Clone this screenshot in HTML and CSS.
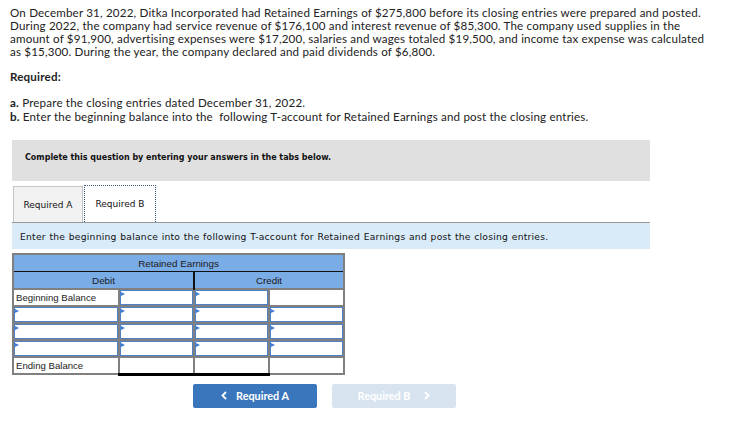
FILE: index.html
```html
<!DOCTYPE html>
<html>
<head>
<meta charset="utf-8">
<link rel="stylesheet" href="styles.css">
</head>
<body>
<div class="page">
  <p class="intro">On December 31, 2022, Ditka Incorporated had Retained Earnings of $275,800 before its closing entries were prepared and posted. During 2022, the company had service revenue of $176,100 and interest revenue of $85,300. The company used supplies in the amount of $91,900, advertising expenses were $17,200, salaries and wages totaled $19,500, and income tax expense was calculated as $15,300. During the year, the company declared and paid dividends of $6,800.</p>
  <p class="req">Required:</p>
  <p class="item"><b>a.</b> Prepare the closing entries dated December 31, 2022.</p>
  <p class="item"><b>b.</b> Enter the beginning balance into the &nbsp;following T-account for Retained Earnings and post the closing entries.</p>

  <div class="panel">
    <div class="notice">Complete this question by entering your answers in the tabs below.</div>
    <div class="tabs">
      <div class="tab">Required A</div>
      <div class="tab active">Required B</div>
    </div>
    <div class="instr">Enter the beginning balance into the following T-account for Retained Earnings and post the closing entries.</div>

    <table class="tacct">
      <colgroup>
        <col class="c1"><col class="c2"><col class="c3"><col class="c4">
      </colgroup>
      <tr><th colspan="4" class="title">Retained Earnings</th></tr>
      <tr><th colspan="2" class="side dr">Debit</th><th colspan="2" class="side">Credit</th></tr>
      <tr>
        <td class="lbl">Beginning Balance</td>
        <td class="in"><div class="box"></div></td>
        <td class="in split"><div class="box"></div></td>
        <td class="plain"></td>
      </tr>
      <tr>
        <td class="in"><div class="box"></div></td>
        <td class="in"><div class="box"></div></td>
        <td class="in split"><div class="box"></div></td>
        <td class="in"><div class="box"></div></td>
      </tr>
      <tr>
        <td class="in"><div class="box"></div></td>
        <td class="in"><div class="box"></div></td>
        <td class="in split"><div class="box"></div></td>
        <td class="in"><div class="box"></div></td>
      </tr>
      <tr>
        <td class="in"><div class="box"></div></td>
        <td class="in"><div class="box"></div></td>
        <td class="in split"><div class="box"></div></td>
        <td class="in"><div class="box"></div></td>
      </tr>
      <tr class="end">
        <td class="lbl">Ending Balance</td>
        <td class="tot"></td>
        <td class="tot split"></td>
        <td class="plain last"></td>
      </tr>
    </table>

    <div class="nav">
      <div class="btn prev"><svg width="6" height="9" viewBox="0 0 6 9"><path d="M5 1 L1.5 4.5 L5 8" fill="none" stroke="#fff" stroke-width="1.8"/></svg><span>Required A</span></div>
      <div class="btn next"><span>Required B</span><svg width="6" height="9" viewBox="0 0 6 9"><path d="M1 1 L4.5 4.5 L1 8" fill="none" stroke="#fff" stroke-width="1.8"/></svg></div>
    </div>
  </div>
</div>
</body>
</html>
```

FILE: styles.css
```css
html, body {
  margin: 0;
  padding: 0;
  background: #fff;
}
.page {
  padding: 6px 0 0 10px;
  font-family: "Lato", "Liberation Sans", sans-serif;
  color: #222;
}
.intro {
  margin: 0;
  width: 702px;
  font-size: 11.6px;
  letter-spacing: 0.175px;
  line-height: 13px;
}
.req {
  margin: 12px 0 0 0;
  font-size: 11.6px;
  letter-spacing: 0.175px;
  line-height: 13px;
  font-weight: bold;
}
.item {
  margin: 0;
  font-size: 11.6px;
  letter-spacing: 0.175px;
  line-height: 14px;
}
.req + .item {
  margin-top: 13px;
}
.item b {
  font-weight: bold;
}
.panel {
  margin: 16px 0 0 2px;
  width: 638px;
}
.notice {
  background: #e0e0e0;
  height: 41px;
  box-sizing: border-box;
  padding: 11px 0 0 13px;
  font-family: "DejaVu Sans Condensed", "DejaVu Sans", sans-serif;
  font-weight: bold;
  font-size: 8.9px;
  line-height: 12px;
  color: #111;
}
.tabs {
  display: flex;
  margin-top: 4px;
  padding-left: 1px;
  border-bottom: 1px solid #999;
  height: 37px;
  align-items: flex-end;
}
.tab {
  height: 36px;
  box-sizing: border-box;
  padding: 0;
  display: flex;
  align-items: center;
  background: #f2f2f2;
  border: 1px solid #c4c4c4;
  border-bottom: none;
  font-family: "DejaVu Sans", sans-serif;
  font-size: 9px;
  color: #111;
  width: 70px;
  justify-content: center;
}
.tab.active {
  height: 37px;
  background: #fff;
  border: 1px dotted #3c5a80;
  border-bottom: none;
  margin-left: 1px;
  width: 72px;
}
.instr {
  background: #d9ebf9;
  height: 26px;
  box-sizing: border-box;
  padding: 8px 0 0 8px;
  font-family: "DejaVu Sans", sans-serif;
  font-size: 9.2px;
  letter-spacing: 0.24px;
  word-spacing: 0.4px;
  line-height: 12px;
  color: #111;
}
.tacct {
  margin-top: 4px;
  border-collapse: collapse;
  table-layout: fixed;
  width: 331px;
  border: 2px solid #808080;
  font-family: "Liberation Sans", sans-serif;
  font-size: 9.6px;
  color: #222;
}
.c1 { width: 106px; }
.c2, .c3, .c4 { width: 75px; }
.tacct th {
  background: #7aace6;
  font-weight: normal;
  height: 16px;
  padding: 0;
  font-size: 9.8px;
  color: #1a1a1a;
}
.tacct th.title {
  border-bottom: 1px solid #111;
}
.tacct th.dr {
  border-right: 2px solid #111;
}
.tacct td {
  height: 17px;
  padding: 0;
  border: 2px solid #808080;
  background: #fff;
  box-sizing: border-box;
}
.tacct td.split {
  border-left: 2px solid #111;
}
.tacct td.lbl {
  padding-left: 2px;
  white-space: nowrap;
}
.box {
  position: relative;
  height: 13px;
  border: 1px solid #4f81c7;
  background: #fff;
}
.box::before {
  content: "";
  position: absolute;
  left: 0;
  top: 1px;
  border-top: 2.5px solid transparent;
  border-bottom: 2.5px solid transparent;
  border-left: 4px solid #3d7cd6;
}
.tacct tr.end td {
  border-top: 2px solid #111;
}
.tacct tr.end td.lbl {
  border-top: 2px solid #808080;
}
.tacct td.tot {
  border-bottom: 3px solid #000;
}
.nav {
  display: flex;
  gap: 15px;
  margin: 8px 0 0 181px;
}
.btn {
  width: 124px;
  height: 24px;
  border-radius: 2px;
  display: flex;
  align-items: center;
  justify-content: center;
  gap: 9px;
  font-family: "Lato", "Liberation Sans", sans-serif;
  font-weight: bold;
  font-size: 10.8px;
  color: #fff;
}
.btn.prev {
  background: #3a76bb;
}
.btn.next {
  background: #d8e3f0;
  gap: 14px;
}
```
